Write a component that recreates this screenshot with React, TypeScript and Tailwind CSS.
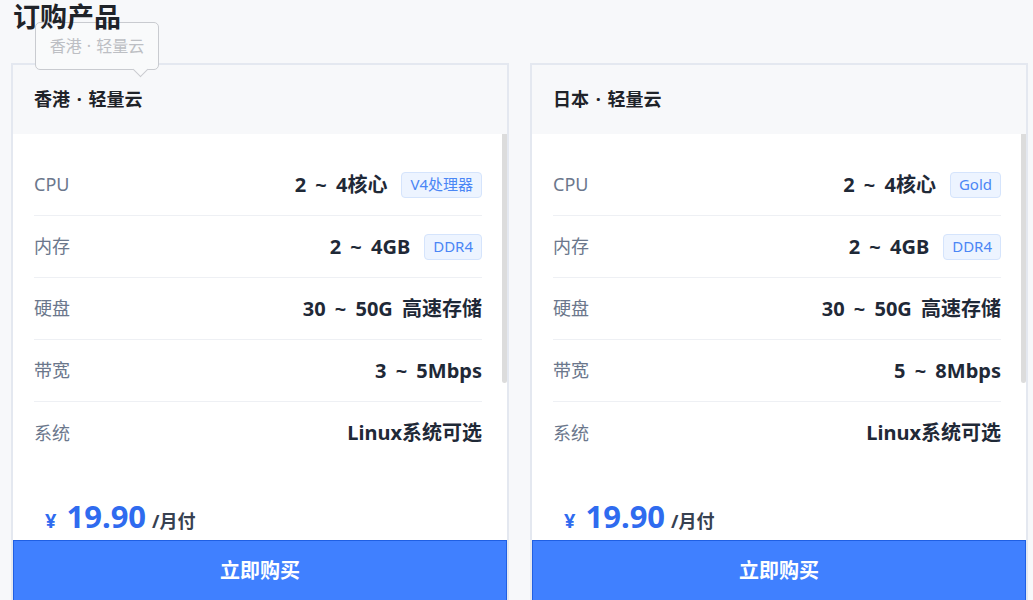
import React from 'react';

interface Spec { label: string; value: string; tag?: string }
interface Plan { name: string; price: string; specs: Spec[] }

const plans: Plan[] = [
  {
    name: '香港 · 轻量云',
    price: '19.90',
    specs: [
      { label: 'CPU', value: '2 ~ 4核心', tag: 'V4处理器' },
      { label: '内存', value: '2 ~ 4GB', tag: 'DDR4' },
      { label: '硬盘', value: '30 ~ 50G 高速存储' },
      { label: '带宽', value: '3 ~ 5Mbps' },
      { label: '系统', value: 'Linux系统可选' },
    ],
  },
  {
    name: '日本 · 轻量云',
    price: '19.90',
    specs: [
      { label: 'CPU', value: '2 ~ 4核心', tag: 'Gold' },
      { label: '内存', value: '2 ~ 4GB', tag: 'DDR4' },
      { label: '硬盘', value: '30 ~ 50G 高速存储' },
      { label: '带宽', value: '5 ~ 8Mbps' },
      { label: '系统', value: 'Linux系统可选' },
    ],
  },
];

function Tooltip({ text }: { text: string }) {
  return (
    <div className="absolute left-[22px] top-[-43px] z-10 w-[124px] h-[48px] rounded-[5px] border border-[#c9cbd0] bg-[#f9fafb] flex items-center justify-center text-[16px] text-[#bdbfc4] [word-spacing:1px]">
      {text}
      <span className="absolute left-[99px] top-[41px] w-[11px] h-[11px] rotate-45 border-r border-b border-[#c9cbd0] bg-[#f9fafb]" />
    </div>
  );
}

function PlanCard({ plan, tip }: { plan: Plan; tip?: boolean }) {
  return (
    <div className="relative w-[498px] border-2 border-[#e4e8f0] bg-white">
      {tip && <Tooltip text={plan.name} />}
      <div className="h-[69px] flex items-center px-[21px] bg-[#f7f8fa] text-[18px] font-bold text-[#1f2329] [word-spacing:2px]">
        {plan.name}
      </div>
      <div className="relative bg-white pt-[20px] pl-[21px] pr-[25px]">
        <span className="absolute right-0 top-0 w-[5px] h-[249px] rounded-b-full bg-[#dcdcdc]" />
        {plan.specs.map((s, i) => (
          <div
            key={s.label}
            className={
              i < plan.specs.length - 1
                ? 'h-[62px] flex items-center justify-between border-b border-[#eef0f4]'
                : 'h-[62px] flex items-center justify-between'
            }
          >
            <span className="text-[18px] text-[#6b778c]">{s.label}</span>
            <span className="flex items-center gap-[14px]">
              <span className="text-[20px] font-bold text-[#1f2937] [word-spacing:4px]">{s.value}</span>
              {s.tag && (
                <span className="h-[26px] flex items-center px-[8px] rounded-[4px] border border-[#d5e4fc] bg-[#edf4ff] text-[15px] text-[#4a86f5]">
                  {s.tag}
                </span>
              )}
            </span>
          </div>
        ))}
        <div className="h-[76px] flex items-end pb-[8px] pl-[11px]">
          <span className="flex items-baseline leading-none">
            <span className="text-[20px] font-bold text-[#2f6bef] mr-[10px]">¥</span>
            <span className="text-[31px] font-bold text-[#2f6bef] mr-[6px]">{plan.price}</span>
            <span className="text-[18px] font-bold text-[#374151]">/月付</span>
          </span>
        </div>
      </div>
      <button className="w-full h-[62px] flex items-center justify-center bg-[#4080ff] border border-[#1f5fe3] text-[20px] font-bold text-white">
        立即购买
      </button>
    </div>
  );
}

export default function App() {
  return (
    <div className="min-h-screen overflow-hidden bg-[#f7f8fa] font-['Noto_Sans','Noto_Sans_CJK_SC',sans-serif]">
      <h1 className="relative z-20 h-[27px] mt-[2px] pl-[13px] text-[27px] leading-none font-bold text-[#1f2329] font-['Noto_Sans_CJK_SC',sans-serif]">
        订购产品
      </h1>
      <div className="flex gap-[21px] pl-[11px] mt-[34px]">
        {plans.map((p, i) => (
          <PlanCard key={p.name} plan={p} tip={i === 0} />
        ))}
      </div>
    </div>
  );
}
